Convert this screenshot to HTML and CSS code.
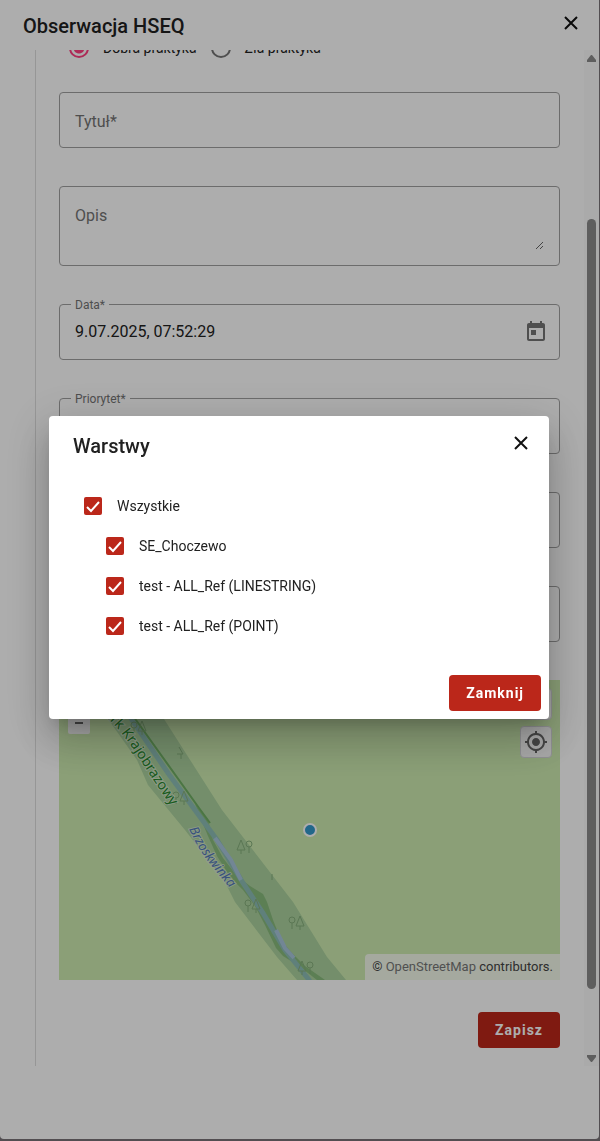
FILE: index.html
```html
<!DOCTYPE html>
<html lang="pl">
<head>
<meta charset="utf-8">
<meta name="viewport" content="width=device-width, initial-scale=1">
<title>Obserwacja HSEQ</title>
<link rel="stylesheet" href="styles.css">
</head>
<body>
<main class="sheet">
  <header class="sheet-header">
    <h1 class="title">Obserwacja HSEQ</h1>
    <button class="close" type="button" aria-label="Zamknij formularz">
      <svg viewBox="0 0 14 14" width="14" height="14"><path d="M1 1 13 13M13 1 1 13"/></svg>
    </button>
  </header>
  <div class="scroll-area">
    <form class="form">
      <div class="radios">
        <label class="radio"><input type="radio" name="kind" checked><span>Dobra praktyka</span></label>
        <label class="radio"><input type="radio" name="kind"><span>Zła praktyka</span></label>
      </div>
      <div class="fields">
        <div class="field">
          <label class="placeholder" for="title">Tytuł*</label>
          <input class="control" id="title" type="text">
        </div>
        <div class="field field-area">
          <label class="placeholder" for="description">Opis</label>
          <textarea class="control" id="description"></textarea>
        </div>
        <div class="field">
          <label class="floating" for="date">Data*</label>
          <input class="control" id="date" type="text" value="9.07.2025, 07:52:29">
          <button class="icon-button" type="button" aria-label="Wybierz datę">
            <svg viewBox="0 0 24 24" width="24" height="24"><path d="M19 3h-1V1h-2v2H8V1H6v2H5c-1.11 0-1.99.9-1.99 2L3 19c0 1.1.89 2 2 2h14c1.1 0 2-.9 2-2V5c0-1.1-.9-2-2-2zm0 16H5V8h14v11zM7 10h5v5H7z"/></svg>
          </button>
        </div>
        <div class="field">
          <label class="floating" for="priority">Priorytet*</label>
          <select class="control" id="priority"></select>
        </div>
        <div class="field"><select class="control" aria-label="Kategoria"></select></div>
        <div class="field"><select class="control" aria-label="Obiekt"></select></div>
        <div class="map">
          <svg class="map-canvas" viewBox="0 0 501 300" preserveAspectRatio="xMidYMid slice" aria-hidden="true">
            <defs>
              <path id="park-line" d="M45 35Q62 50 76 72T120 138"/>
              <path id="river-line" d="M130 149Q139 169 151 184T176 214"/>
              <g id="trees" class="tree"><circle cx="-4" cy="-3" r="3"/><path d="M-4 0V6M4-7 0 3H8ZM4 3V7"/></g>
            </defs>
            <path class="wood" d="M20 0H80L105 39 163 130 234 222 268 277 287 300H238L218 277 176 222 165 200 126 150 89 105 78 80 49 39Z"/>
            <path class="scrub" d="M136 124 149 140 154 160 164 178 178 196 191 206 204 214 208 222 214 240 222 260 232 272 246 286 266 300H258L240 286 224 276 217 268 206 245 196 226 184 210 172 198 158 176 149 156Z"/>
            <path class="river" d="M48 0 73 40 109 93 136 130 158 160 184 203 204 233 226 270 251 301"/>
            <path class="bank" d="M51 0 77 40 140 128 151 143"/>
            <path class="water" d="M156 158 172 180 182 200M217 250 226 268 235 278"/>
            <use href="#trees" x="79" y="48"/>
            <path class="tree" d="M118 74H124L120 67M122 74V79"/>
            <use href="#trees" x="121" y="118"/>
            <use href="#trees" transform="translate(186 167) scale(-1 1)"/>
            <path class="tree" d="M213 194V200"/>
            <use href="#trees" x="193" y="226"/>
            <use href="#trees" x="237" y="243"/>
            <use href="#trees" transform="translate(247 288) scale(-1 1)"/>
            <text class="park-name"><textPath href="#park-line">ark Krajobrazowy</textPath></text>
            <text class="river-name"><textPath href="#river-line">Brzoskwinka</textPath></text>
            <circle class="pin" cx="251" cy="150" r="6"/>
          </svg>
          <div class="map-zoom">
            <button type="button" aria-label="Przybliż"></button>
            <button type="button" aria-label="Oddal"><svg viewBox="0 0 10 10" width="10" height="10"><path d="M1 5H9"/></svg></button>
          </div>
          <div class="map-tools">
            <button type="button" aria-label="Warstwy"></button>
            <button type="button" aria-label="Moja lokalizacja">
              <svg viewBox="0 0 24 24" width="24" height="24"><path d="M12 8c-2.210 0-4 1.790-4 4s1.790 4 4 4 4-1.790 4-4-1.790-4-4-4zm8.940 3c-.46-4.170-3.770-7.480-7.940-7.940V1h-2v2.060C6.830 3.520 3.520 6.830 3.060 11H1v2h2.060c.46 4.170 3.770 7.480 7.940 7.940V23h2v-2.060c4.170-.46 7.480-3.770 7.940-7.940H23v-2h-2.060zM12 19c-3.870 0-7-3.130-7-7s3.130-7 7-7 7 3.130 7 7-3.130 7-7 7z"/></svg>
            </button>
          </div>
          <p class="attribution">© <a href="#osm">OpenStreetMap</a> contributors.</p>
        </div>
      </div>
      <button class="primary save" type="button">Zapisz</button>
    </form>
    <div class="scrollbar" aria-hidden="true">
      <svg viewBox="0 0 9 7" width="9" height="7"><path d="M4 0H5L9 5V7H0V5Z"/></svg>
      <div class="track"><span class="before"></span><span class="thumb"></span><span class="after"></span></div>
      <svg viewBox="0 0 9 7" width="9" height="7"><path d="M0 0H9V2L5 7H4L0 2Z"/></svg>
    </div>
  </div>
</main>
<div class="overlay">
  <section class="dialog" role="dialog" aria-modal="true" aria-labelledby="layers-title">
    <header class="dialog-header">
      <h2 class="title" id="layers-title">Warstwy</h2>
      <button class="close" type="button" aria-label="Zamknij okno">
        <svg viewBox="0 0 14 14" width="14" height="14"><path d="M1 1 13 13M13 1 1 13"/></svg>
      </button>
    </header>
    <div class="layers">
      <label class="layer"><input type="checkbox" checked><span>Wszystkie</span></label>
      <label class="layer nested"><input type="checkbox" checked><span>SE_Choczewo</span></label>
      <label class="layer nested"><input type="checkbox" checked><span>test - ALL_Ref (LINESTRING)</span></label>
      <label class="layer nested"><input type="checkbox" checked><span>test - ALL_Ref (POINT)</span></label>
    </div>
    <footer class="dialog-footer"><button class="primary" type="button">Zamknij</button></footer>
  </section>
</div>
</body>
</html>
```

FILE: styles.css
```css
* { box-sizing: border-box; }

html, body { height: 100%; }

body {
  margin: 0;
  background: #7a7478;
  color: #212121;
  font: 14px/20px Roboto, "Liberation Sans", sans-serif;
}

button, input, textarea, select { font: inherit; color: inherit; }
button { padding: 0; border: 0; cursor: pointer; }
h1, h2, p { margin: 0; }

.sheet {
  display: flex;
  flex-direction: column;
  height: calc(100vh - 2px);
  margin-right: 1px;
  padding-bottom: 73px;
  border-radius: 0 0 4px 4px;
  background: #fff;
}

.sheet-header,
.dialog-header {
  display: flex;
  justify-content: space-between;
  align-items: flex-start;
  flex: none;
}
.sheet-header { height: 50px; padding: 12px 17px 0 23px; }
.dialog-header { height: 60px; padding: 16px 17px 0 24px; }

.title { font-size: 20px; line-height: 28px; font-weight: 500; }

.close {
  display: grid;
  place-items: center;
  width: 22px;
  height: 22px;
  background: none;
}
.close path { stroke: #111; stroke-width: 2; fill: none; }

.scroll-area { display: flex; flex: 1; min-height: 0; overflow: hidden; }

.form {
  display: flex;
  flex: 1;
  flex-direction: column;
  justify-content: flex-end;
  min-width: 0;
  margin-left: 35px;
  padding: 0 24px 18px 23px;
  border-left: 1px solid #dedede;
}

.radios { display: flex; margin-bottom: 24px; }
.radio {
  display: flex;
  align-items: center;
  gap: 14px;
  padding: 10px 4px 10px 10px;
}
.radio input {
  appearance: none;
  width: 20px;
  height: 20px;
  margin: 0;
  border: 2px solid #757575;
  border-radius: 50%;
}
.radio input:checked {
  border-color: #ff4081;
  background: radial-gradient(circle, #ff4081 5px, transparent 6px);
}

.fields { display: flex; flex-direction: column; gap: 38px; }

.field {
  position: relative;
  display: flex;
  align-items: center;
  height: 56px;
  padding: 0 11px 0 15px;
  border: 1px solid #a0a0a0;
  border-radius: 4px;
  font-size: 16px;
  line-height: 24px;
}
.field-area { height: 80px; padding: 15px; }

.control {
  flex: 1;
  min-width: 0;
  padding: 0;
  border: 0;
  outline: 0;
  background: transparent;
  appearance: none;
}
textarea.control { height: 100%; resize: vertical; }

.placeholder { position: absolute; top: 17px; left: 15px; color: #747474; }
.floating {
  position: absolute;
  top: -9px;
  left: 11px;
  padding: 0 4px;
  background: #fff;
  color: #747474;
  font-size: 12px;
  line-height: 18px;
}

.icon-button { display: grid; background: none; fill: #757575; }

.map { position: relative; height: 300px; overflow: hidden; background: #cdebb0; }
.map-canvas { display: block; width: 100%; height: 100%; }
.wood { fill: #abd19e; }
.scrub { fill: #7fb573; opacity: 0.8; }
.river { fill: none; stroke: #8dbdb5; stroke-width: 5; }
.bank { fill: none; stroke: #6fae64; stroke-width: 2; }
.water { fill: none; stroke: #a9c6dc; stroke-width: 4; }
.tree { fill: none; stroke: #86b07c; stroke-width: 1; }
.park-name,
.river-name {
  font: 14px "Noto Sans", sans-serif;
  paint-order: stroke;
  stroke: #dcebd4;
  stroke-opacity: 0.7;
  stroke-width: 2px;
}
.park-name { fill: #25862b; }
.river-name { fill: #5279b8; font-size: 13px; font-style: italic; }
.pin { fill: #3399cc; stroke: #fff; stroke-width: 2; }

.map-zoom,
.map-tools { position: absolute; top: 9px; display: grid; }
.map-zoom { left: 9px; gap: 1px; }
.map-tools { top: 8px; right: 8px; gap: 6px; }
.map-zoom button,
.map-tools button {
  display: grid;
  place-items: center;
  width: 22px;
  height: 22px;
  border-radius: 2px;
  background: #f8f8f8;
}
.map-tools button {
  width: 32px;
  height: 32px;
  border: 1px solid #d4d4d8;
  border-radius: 4px;
  fill: #666;
}
.map-zoom path { stroke: #666; stroke-width: 2; }

.attribution {
  position: absolute;
  right: 0;
  bottom: 0;
  padding: 3px 7px;
  border-radius: 4px 0 0 0;
  background: rgba(255, 255, 255, 0.75);
  color: #444;
  font-size: 13px;
}
.attribution a { color: #777; text-decoration: none; }

.primary {
  height: 36px;
  padding: 0 17px;
  border-radius: 4px;
  background: #bb271a;
  color: #fff;
  font-weight: 700;
  letter-spacing: 1px;
}
.save { align-self: flex-end; flex: none; margin-top: 32px; }

.scrollbar {
  display: flex;
  flex-direction: column;
  align-items: center;
  width: 15px;
  padding: 5px 0 4px;
  background: #fbfbfb;
  fill: #8b8b8b;
}
.track { display: flex; flex: 1; flex-direction: column; width: 9px; padding: 4px 0; }
.before { flex: 153; }
.thumb { flex: 770; border-radius: 5px; background: #8b8b8b; }
.after { flex: 62; }

.overlay {
  position: fixed;
  inset: 0;
  display: grid;
  place-items: center;
  padding: 0 2px 6px 0;
  background: rgba(0, 0, 0, 0.32);
}

.dialog {
  width: 500px;
  max-width: 90vw;
  border-radius: 4px;
  background: #fff;
  box-shadow:
    0 11px 15px -7px rgba(0, 0, 0, 0.2),
    0 24px 38px 3px rgba(0, 0, 0, 0.14),
    0 9px 46px 8px rgba(0, 0, 0, 0.12);
}

.layers { padding: 10px 24px 0 35px; }
.layer { display: flex; align-items: center; gap: 15px; height: 40px; }
.nested { margin-left: 22px; }
.layer input {
  appearance: none;
  width: 18px;
  height: 18px;
  margin: 0;
  border-radius: 2px;
  background: #bb271a url("data:image/svg+xml,%3Csvg xmlns='http://www.w3.org/2000/svg' viewBox='0 0 18 18'%3E%3Cpath d='M3 10 7 14 15 5' fill='none' stroke='white' stroke-width='2'/%3E%3C/svg%3E");
}

.dialog-footer { display: flex; justify-content: flex-end; padding: 29px 8px 8px; }
```
